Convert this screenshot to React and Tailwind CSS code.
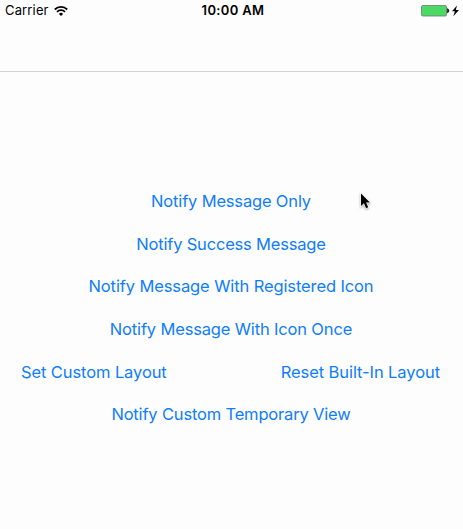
function Action({ children, className = "" }) {
  return (
    <button className={`whitespace-nowrap text-[16.5px] leading-6 text-[#0f7dfc] ${className}`}>
      {children}
    </button>
  );
}

function Wifi() {
  return (
    <svg width="14" height="11" viewBox="0 0 14 11" fill="none" stroke="#000" strokeWidth="1.8">
      <path d="M0.8 3.5A8.8 8.8 0 0 1 13.2 3.5" />
      <path d="M3 5.8A5.7 5.7 0 0 1 11 5.8" />
      <path d="M7 10.1L4.9 7.9A3 3 0 0 1 9.1 7.9Z" fill="#000" stroke="none" />
    </svg>
  );
}

function Battery() {
  return (
    <svg width="39" height="13" viewBox="0 0 39 13">
      <rect x="0.5" y="0.5" width="25" height="10.5" rx="1.2" fill="#4cd964" stroke="#6f7a71" strokeWidth="0.8" />
      <path d="M26.3 3.5a2.3 2.3 0 0 1 0 4.4z" fill="#000" stroke="#000" strokeWidth="0.4" />
      <path d="M36 0.5L31 6.3h2.9l-1.6 5 5.7-6.3h-3.2z" fill="#000" />
    </svg>
  );
}

function Pointer() {
  return (
    <svg
      className="absolute left-[359px] top-[191px] drop-shadow-[0_1px_1px_rgba(0,0,0,0.35)]"
      width="14"
      height="20"
      viewBox="0 0 14 20"
    >
      <path
        d="M2 2.5v12.5l2.9-2.8 2.2 5.1 2.2-1-2.2-4.7h3.8z"
        fill="#000"
        stroke="#fff"
        strokeWidth="1.2"
        paintOrder="stroke"
      />
    </svg>
  );
}

export default function App() {
  return (
    <div className="relative h-[529px] w-[463px] overflow-hidden bg-[#fdfdfd] font-['Inter',sans-serif]">
      <header className="h-[72px] border-b border-[#d2d2d2]">
        <div className="grid h-[22px] grid-cols-3 items-center pl-[5px] pr-[3px] text-[13px] text-black">
          <div className="flex items-center gap-[5px]">
            <span className="tracking-[0.15px]">Carrier</span>
            <Wifi />
          </div>
          <span className="pl-px text-center font-semibold tracking-[0.35px]">10:00 AM</span>
          <div className="flex justify-end">
            <Battery />
          </div>
        </div>
      </header>
      <main className="grid auto-rows-[42.7px] items-center justify-items-center pr-px pt-[107.6px]">
        <Action className="tracking-[-0.17px]">Notify Message Only</Action>
        <Action className="tracking-[-0.19px]">Notify Success Message</Action>
        <Action className="tracking-[-0.11px]">Notify Message With Registered Icon</Action>
        <Action className="tracking-[-0.16px]">Notify Message With Icon Once</Action>
        <div className="flex w-full justify-between pl-[21px] pr-[22px]">
          <Action className="tracking-[-0.1px]">Set Custom Layout</Action>
          <Action className="tracking-[-0.08px]">Reset Built-In Layout</Action>
        </div>
        <Action className="tracking-[-0.17px]">Notify Custom Temporary View</Action>
      </main>
      <Pointer />
    </div>
  );
}
